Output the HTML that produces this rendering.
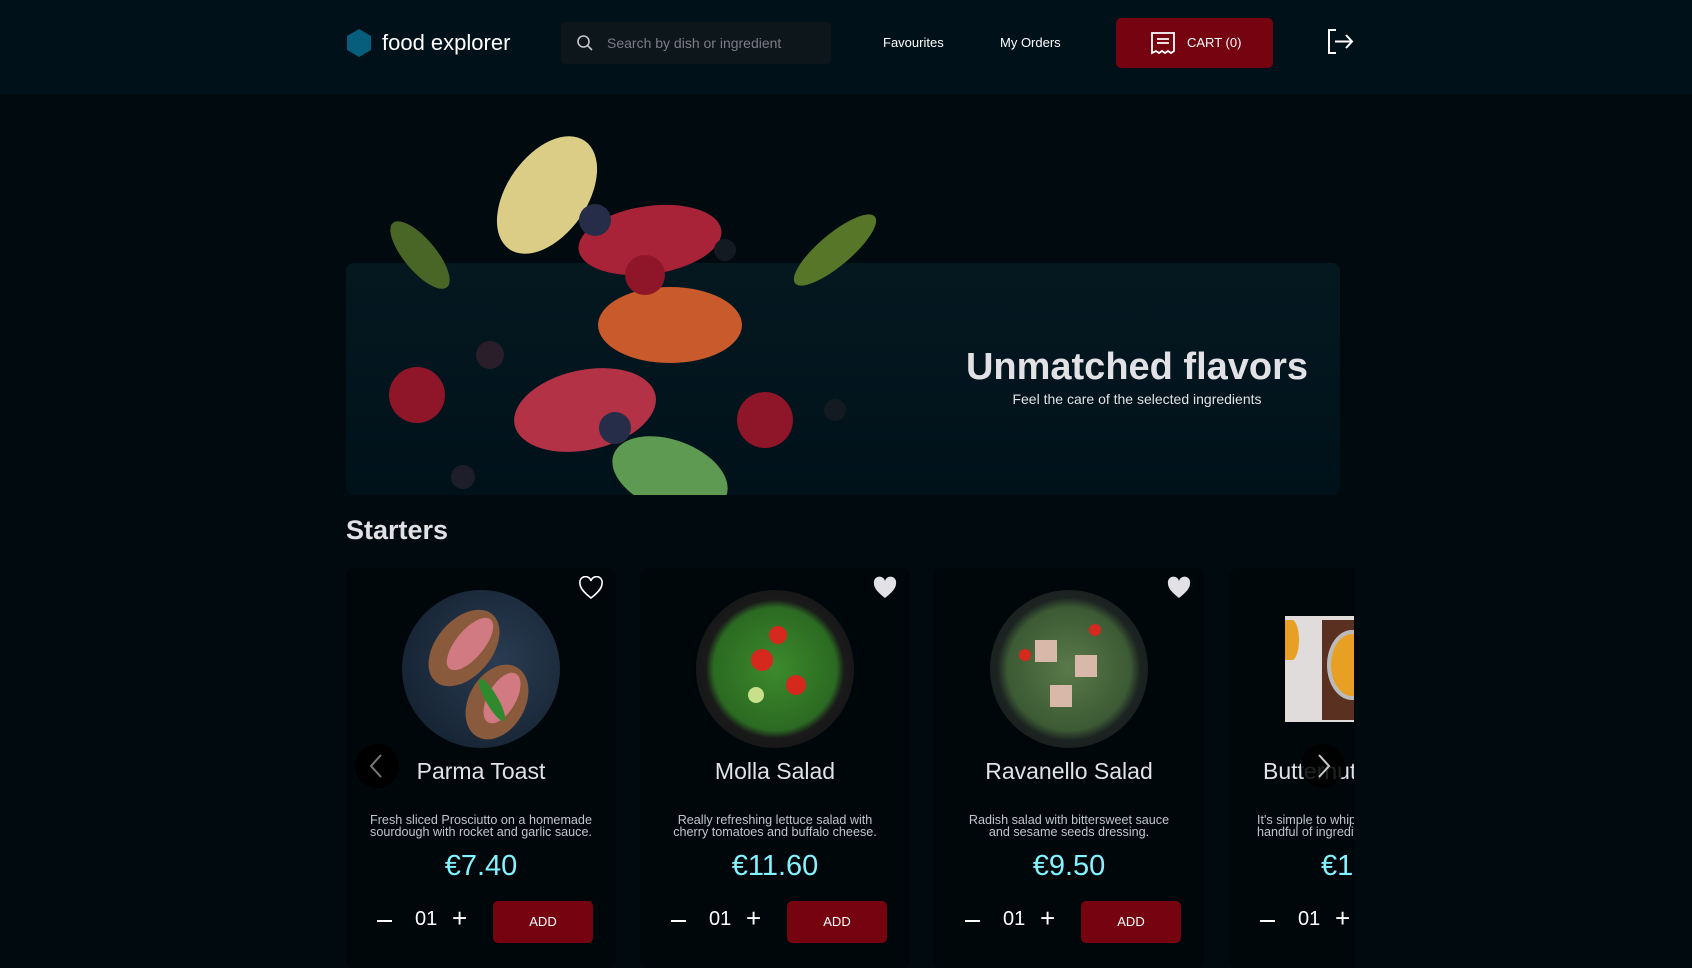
<!DOCTYPE html>
<html><head><meta charset="utf-8"><style>
*{margin:0;padding:0;box-sizing:border-box}
body{width:1692px;height:962px;overflow:hidden;background:#000a0f;font-family:"Liberation Sans",sans-serif;color:#e1e1e6;position:relative}
.hdr{position:absolute;left:0;top:0;width:1692px;height:94px;background:#00111a}
.abs{position:absolute}
.card{position:absolute;top:568px;width:270px;height:400px;background:#00070b;border-radius:8px;overflow:hidden}
.card .img{position:absolute;left:56px;top:22px;width:158px;height:158px;border-radius:50%}
.card .nm{position:absolute;left:0;width:270px;top:190px;text-align:center;font-size:23px}
.card .ds{position:absolute;left:17px;width:236px;top:246px;text-align:center;font-size:12.6px;line-height:12px;color:#c4c4cc}
.card .pr{position:absolute;left:0;width:270px;top:282px;text-align:center;font-size:29px;color:#82f3ff}
.card .st{position:absolute;top:340px;font-size:20px;color:#fff}
.card .mn{position:absolute;top:352px;width:15px;height:2px;background:#fff}
.card .add{position:absolute;left:147px;top:333px;width:100px;height:42px;background:#750310;border-radius:5px;color:#fff;font-size:13px;text-align:center;line-height:42px}
.card .hv{position:absolute;left:232px;top:8px}
</style></head><body>
<div class="hdr"></div>
<svg class="abs" style="left:347px;top:29px" width="24" height="28" viewBox="0 0 24 28"><path d="M12 0L24 7V21L12 28L0 21V7Z" fill="#065e7c"/></svg>
<div class="abs" style="left:382px;top:30px;font-size:22px;color:#fff">food explorer</div>
<div class="abs" style="left:561px;top:22px;width:270px;height:42px;background:#0d161b;border-radius:5px"></div>
<svg class="abs" style="left:576px;top:34px" width="18" height="18" viewBox="0 0 18 18" fill="none" stroke="#c4c4cc" stroke-width="1.6"><circle cx="7.5" cy="7.5" r="5.5"/><path d="M11.5 11.5L16 16"/></svg>
<div class="abs" style="left:607px;top:35px;font-size:14px;color:#7c7c8a">Search by dish or ingredient</div>
<div class="abs" style="left:883px;top:35px;font-size:13px;color:#fff">Favourites</div>
<div class="abs" style="left:1000px;top:35px;font-size:13px;color:#fff">My Orders</div>
<div class="abs" style="left:1116px;top:18px;width:157px;height:50px;background:#750310;border-radius:5px"></div>
<svg class="abs" style="left:1150px;top:31px" width="26" height="24" viewBox="0 0 26 24" fill="none" stroke="#fff" stroke-width="1.8"><path d="M2 2H24V20L21 22L18 20L15 22L12 20L9 22L6 20L2 22Z"/><path d="M7 8H19M7 12H19"/></svg>
<div class="abs" style="left:1187px;top:35px;font-size:13px;color:#fff">CART (0)</div>
<svg class="abs" style="left:1326px;top:28px" width="28" height="27" viewBox="0 0 28 27" fill="none" stroke="#fff" stroke-width="2"><path d="M10 2H3V25H10"/><path d="M9 13.5H26M20 7L26 13.5L20 20"/></svg>

<div class="abs" style="left:346px;top:263px;width:994px;height:232px;border-radius:8px;background:linear-gradient(180deg,#051820,#00111a)"></div>
<svg class="abs" style="left:370px;top:130px" width="520" height="365" viewBox="0 0 520 365">
<ellipse cx="50" cy="125" rx="16" ry="42" transform="rotate(-40 50 125)" fill="#4a6626"/>
<ellipse cx="465" cy="120" rx="16" ry="52" transform="rotate(50 465 120)" fill="#587628"/>
<ellipse cx="177" cy="65" rx="40" ry="66" transform="rotate(35 177 65)" fill="#dccd86"/>
<ellipse cx="280" cy="110" rx="72" ry="34" transform="rotate(-8 280 110)" fill="#a82338"/>
<ellipse cx="300" cy="195" rx="72" ry="38" fill="#c85a2c"/>
<ellipse cx="215" cy="280" rx="72" ry="40" transform="rotate(-12 215 280)" fill="#b43246"/>
<ellipse cx="300" cy="345" rx="60" ry="35" transform="rotate(20 300 345)" fill="#5f9a52"/>
<circle cx="47" cy="265" r="28" fill="#8f1528"/><circle cx="395" cy="290" r="28" fill="#8f1528"/><circle cx="275" cy="145" r="20" fill="#8f1528"/>
<circle cx="225" cy="90" r="16" fill="#262d48"/><circle cx="245" cy="298" r="16" fill="#262d48"/><circle cx="120" cy="225" r="14" fill="#2a1e2a"/><circle cx="465" cy="280" r="11" fill="#141a22"/><circle cx="355" cy="120" r="11" fill="#141a22"/><circle cx="93" cy="347" r="12" fill="#1e1e2a"/>
</svg>
<div class="abs" style="left:937px;top:346px;width:400px;text-align:center;font-size:38px;font-weight:bold;color:#e1e1e6">Unmatched flavors</div>
<div class="abs" style="left:937px;top:391px;width:400px;text-align:center;font-size:14px;color:#e1e1e6">Feel the care of the selected ingredients</div>

<div class="abs" style="left:346px;top:515px;font-size:27px;font-weight:bold;color:#e1e1e6">Starters</div>

<div class="card" style="left:346px">
<svg class="hv" width="26" height="24" viewBox="0 0 26 24"><path d="M13 22C4 15 2 11 2 7.5A5.5 5.5 0 0 1 13 5A5.5 5.5 0 0 1 24 7.5C24 11 22 15 13 22Z" fill="none" stroke="#fff" stroke-width="1.6"/></svg>
<div class="img" style="background:radial-gradient(circle at 60% 45%,#2a3c52,#101c2a)"></div>
<svg class="abs" style="left:56px;top:22px" width="158" height="158"><ellipse cx="62" cy="58" rx="28" ry="44" transform="rotate(40 62 58)" fill="#8a5a3c"/><ellipse cx="95" cy="112" rx="28" ry="40" transform="rotate(30 95 112)" fill="#8a5a3c"/><ellipse cx="68" cy="54" rx="14" ry="32" transform="rotate(40 68 54)" fill="#d27a82"/><ellipse cx="100" cy="108" rx="14" ry="28" transform="rotate(30 100 108)" fill="#d27a82"/><ellipse cx="90" cy="110" rx="6" ry="24" transform="rotate(-30 90 110)" fill="#2f8a2e"/></svg>
<div class="nm">Parma Toast</div>
<div class="ds">Fresh sliced Prosciutto on a homemade sourdough with rocket and garlic sauce.</div>
<div class="pr">€7.40</div>
<div class="mn" style="left:31px"></div><div class="st" style="left:69px">01</div><div class="st" style="left:106px;font-size:26px;top:335px">+</div>
<div class="add">ADD</div>
</div>

<div class="card" style="left:640px">
<svg class="hv" width="26" height="24" viewBox="0 0 26 24"><path d="M13 22C4 15 2 11 2 7.5A5.5 5.5 0 0 1 13 5A5.5 5.5 0 0 1 24 7.5C24 11 22 15 13 22Z" fill="#e1e1e6"/></svg>
<div class="img" style="background:radial-gradient(circle,#3d8a2c 0,#2b6a22 55%,#1a1a1a 62%,#0e0e0e 100%)"></div>
<svg class="abs" style="left:56px;top:22px" width="158" height="158"><circle cx="66" cy="70" r="11" fill="#d4291c"/><circle cx="100" cy="95" r="10" fill="#d4291c"/><circle cx="82" cy="45" r="9" fill="#d4291c"/><circle cx="60" cy="105" r="8" fill="#c8e08a"/></svg>
<div class="nm">Molla Salad</div>
<div class="ds" style="left:27px;width:216px">Really refreshing lettuce salad with cherry tomatoes and buffalo cheese.</div>
<div class="pr">€11.60</div>
<div class="mn" style="left:31px"></div><div class="st" style="left:69px">01</div><div class="st" style="left:106px;font-size:26px;top:335px">+</div>
<div class="add">ADD</div>
</div>

<div class="card" style="left:934px">
<svg class="hv" width="26" height="24" viewBox="0 0 26 24"><path d="M13 22C4 15 2 11 2 7.5A5.5 5.5 0 0 1 13 5A5.5 5.5 0 0 1 24 7.5C24 11 22 15 13 22Z" fill="#e1e1e6"/></svg>
<div class="img" style="background:radial-gradient(circle,#5a7a4a 0,#3c5a34 55%,#1c2422 64%,#101414 100%)"></div>
<svg class="abs" style="left:56px;top:22px" width="158" height="158"><rect x="45" y="50" width="22" height="22" fill="#d8b8a8"/><rect x="85" y="65" width="22" height="22" fill="#d8b8a8"/><rect x="60" y="95" width="22" height="22" fill="#d8b8a8"/><circle cx="105" cy="40" r="6" fill="#d4291c"/><circle cx="35" cy="65" r="6" fill="#d4291c"/></svg>
<div class="nm">Ravanello Salad</div>
<div class="ds" style="left:27px;width:216px">Radish salad with bittersweet sauce and sesame seeds dressing.</div>
<div class="pr">€9.50</div>
<div class="mn" style="left:31px"></div><div class="st" style="left:69px">01</div><div class="st" style="left:106px;font-size:26px;top:335px">+</div>
<div class="add">ADD</div>
</div>

<div class="card" style="left:1229px;width:125px;border-radius:8px 0 0 8px">
<div class="abs" style="left:56px;top:48px;width:70px;height:106px;background:#e0dcdc"></div>
<div class="abs" style="left:93px;top:52px;width:40px;height:100px;background:#5a3020"></div>
<div class="abs" style="left:98px;top:62px;width:50px;height:70px;border-radius:50%;background:#e8a024;border:4px solid #bbb"></div>
<div class="abs" style="left:56px;top:52px;width:14px;height:40px;border-radius:0 50% 50% 0;background:#e8a024"></div>
<div class="nm" style="left:34px;text-align:left;width:200px">Butternut</div>
<div class="ds" style="left:28px;text-align:left;width:200px">It's simple to whip up a<br>handful of ingredients</div>
<div class="pr" style="left:92px;text-align:left">€12</div>
<div class="mn" style="left:31px"></div><div class="st" style="left:69px">01</div><div class="st" style="left:106px;font-size:26px;top:335px">+</div>
</div>

<div class="abs" style="left:355px;top:744px;width:44px;height:44px;border-radius:50%;background:#000"></div>
<svg class="abs" style="left:368px;top:753px" width="16" height="26" viewBox="0 0 16 26" fill="none" stroke="#777" stroke-width="2"><path d="M13 2L3 13L13 24"/></svg>
<div class="abs" style="left:1301px;top:744px;width:44px;height:44px;border-radius:50%;background:rgba(0,0,0,.85)"></div>
<svg class="abs" style="left:1316px;top:753px" width="16" height="26" viewBox="0 0 16 26" fill="none" stroke="#ccc" stroke-width="2"><path d="M3 2L13 13L3 24"/></svg>
</body></html>
